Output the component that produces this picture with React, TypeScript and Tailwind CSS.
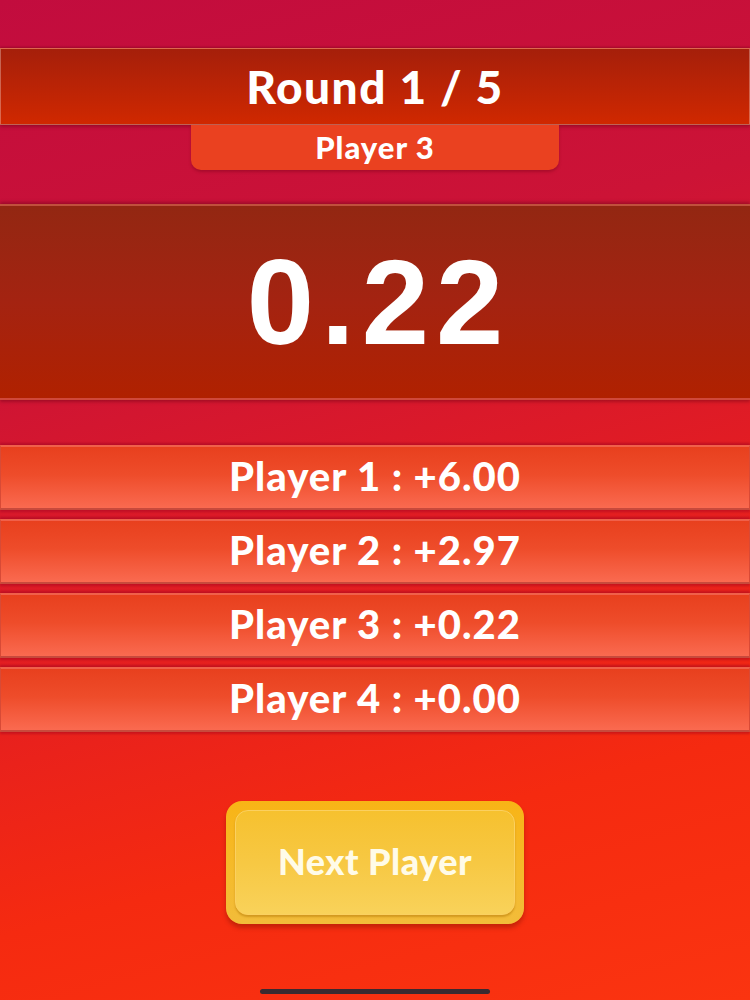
import React from 'react';

const scores = [
  { name: 'Player 1', value: '+6.00' },
  { name: 'Player 2', value: '+2.97' },
  { name: 'Player 3', value: '+0.22' },
  { name: 'Player 4', value: '+0.00' },
];

export default function App() {
  return (
    <div className="relative h-[1000px] w-full overflow-hidden bg-[linear-gradient(165deg,#c20c3e_0%,#cc1336_30%,#e31d22_55%,#f52a10_78%,#fb3410_100%)] pt-[48px] font-['Lato',sans-serif] text-white">
      {/* Round header */}
      <div className="flex h-[77px] items-center justify-center border border-white/30 bg-[linear-gradient(180deg,#a51f0a_0%,#b82306_45%,#d02800_100%)] shadow-[0_-1px_2px_rgba(90,0,20,0.35),0_2px_3px_rgba(90,0,20,0.35)]">
        <span className="text-[46px] font-black tracking-[1.5px] leading-none">Round 1 / 5</span>
      </div>
      <div className="mx-auto flex h-[45px] w-[368px] items-center justify-center rounded-b-[10px] bg-[#ea4120] shadow-[0_2px_3px_rgba(110,0,20,0.35)]">
        <span className="text-[31px] font-black tracking-[1px] leading-none">Player 3</span>
      </div>

      {/* Current score */}
      <div className="mt-[34px] flex h-[196px] items-center justify-center border-y-2 border-t-[#c0503c] border-b-[#d0483a] bg-[linear-gradient(180deg,#932712_0%,#a42311_50%,#b02100_100%)] shadow-[0_-2px_3px_rgba(90,0,20,0.35),0_2px_3px_rgba(90,0,20,0.35)]">
        <span className="pl-[7px] font-['Liberation_Sans',Arial,sans-serif] text-[121px] font-bold leading-none tracking-[7px]">0.22</span>
      </div>

      {/* Score list */}
      <div className="mt-[45px] flex flex-col gap-[9px]">
        {scores.map((s) => (
          <div
            key={s.name}
            className="flex h-[65px] items-center justify-center border-x border-t-2 border-b-2 border-x-[#d84a36] border-t-[#f0604a] border-b-[#c84a3c] bg-[linear-gradient(180deg,#e8401e_0%,#ee4c2a_45%,#fa6a50_100%)] pb-[3px] shadow-[0_-2px_2px_rgba(150,0,30,0.45),0_2px_2px_rgba(150,0,30,0.4)]"
          >
            <span className="text-[40px] font-black leading-none tracking-[1px]">
              {s.name} : {s.value}
            </span>
          </div>
        ))}
      </div>

      {/* Next player button */}
      <div className="mx-auto mt-[69px] w-[298px] rounded-[16px] bg-[linear-gradient(180deg,#f8b416_0%,#f5bb2c_60%,#f2bc3a_100%)] p-[9px] shadow-[0_4px_4px_rgba(140,20,0,0.45)]">
        <div className="flex h-[105px] items-center justify-center rounded-[13px] border border-[#fbd060] bg-[linear-gradient(180deg,#f6c12f_0%,#f7c843_50%,#f9d25a_100%)] pb-[4px] shadow-[0_2px_2px_rgba(170,110,0,0.45)]">
          <span className="text-[36px] font-black leading-none tracking-[0.5px] text-[#fffbe8]">Next Player</span>
        </div>
      </div>

      {/* Home indicator */}
      <div className="absolute bottom-[6px] left-1/2 h-[5px] w-[230px] -translate-x-1/2 rounded-full bg-[#3a2a30]" />
    </div>
  );
}
